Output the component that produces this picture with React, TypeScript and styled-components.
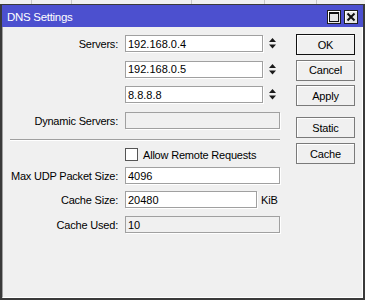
import React from "react";
import styled, { createGlobalStyle } from "styled-components";

const GlobalStyle = createGlobalStyle`
  html, body { margin: 0; padding: 0; background: #f0f0f0; }
  body {
    font-family: "Liberation Sans", Arial, sans-serif;
    font-size: 11px;
    color: #000;
  }
  * { box-sizing: border-box; }
`;

const Page = styled.div`
  width: 365px;
  height: 300px;
  display: flex;
  flex-direction: column;
  overflow: hidden;
`;

const BackStrip = styled.div`
  height: 4px;
  display: flex;
  background: #f0f0f0;
`;

const BackCell = styled.div<{ $w: number }>`
  width: ${(p) => p.$w}px;
  border-right: 1px solid #c8c8c8;
`;

const Window = styled.div`
  flex: 1;
  display: flex;
  flex-direction: column;
  border: 2px solid #3a3a3a;
  border-top-width: 1px;
  background: #f0f0f0;
`;

const TitleBar = styled.div`
  height: 22px;
  background: #4c50cf;
  display: flex;
  align-items: center;
  padding: 1px 5px 0 5px;
  color: #fff;
`;

const TitleText = styled.div`
  flex: 1;
  font-size: 11.5px;
  letter-spacing: -0.3px;
  padding-top: 1px;
`;

const TitleButtons = styled.div`
  display: flex;
  gap: 3px;
`;

const TitleButton = styled.div`
  width: 14px;
  height: 14px;
  border: 1px solid #1e1e1e;
  background: #e6e6e6;
  box-shadow: inset 1px 1px 0 #fff;
  display: flex;
  align-items: center;
  justify-content: center;
`;

const Body = styled.div`
  flex: 1;
  display: flex;
  align-items: flex-start;
  gap: 16px;
  padding: 7px 6px 0 7px;
  border-left: 1px solid #a0a0a0;
  border-right: 1px solid #fff;
  border-bottom: 1px solid #fff;
`;

const FormCol = styled.div`
  width: 270px;
  display: flex;
  flex-direction: column;
  padding-top: 1px;
`;

const Row = styled.div<{ $mb?: number; $h?: number }>`
  display: grid;
  grid-template-columns: 108px 1fr;
  column-gap: 7px;
  align-items: center;
  height: ${(p) => p.$h ?? 17}px;
  margin-bottom: ${(p) => p.$mb ?? 0}px;
`;

const Label = styled.div`
  text-align: right;
  white-space: nowrap;
  letter-spacing: -0.2px;
`;

const Field = styled.div`
  display: flex;
  align-items: center;
  height: 100%;
`;

const TextBox = styled.input<{ $w: number; $disabled?: boolean }>`
  width: ${(p) => p.$w}px;
  height: 17px;
  border: 1px solid #a0a0a0;
  box-shadow: 1px 1px 0 #fff;
  background: ${(p) => (p.$disabled ? "#f0f0f0" : "#fff")};
  font-family: "Liberation Sans", Arial, sans-serif;
  font-size: 11px;
  color: #000;
  padding: 0 2px;
  margin: 0;
  outline: none;
`;

const Spinner = styled.svg`
  margin-left: 6px;
  flex: none;
`;

const Unit = styled.span`
  margin-left: 4px;
  letter-spacing: -0.2px;
`;

const Separator = styled.div`
  border-top: 1px solid #a0a0a0;
  border-bottom: 1px solid #fff;
  margin: 10px 0 7px;
`;

const CheckBox = styled.div`
  width: 13px;
  height: 13px;
  border: 1px solid #555;
  background: #fff;
  flex: none;
`;

const CheckText = styled.span`
  margin-left: 5px;
  letter-spacing: -0.2px;
`;

const ButtonCol = styled.div`
  width: 59px;
  display: flex;
  flex-direction: column;
`;

const Button = styled.div<{ $default?: boolean; $mb?: number }>`
  height: 21px;
  margin-bottom: ${(p) => p.$mb ?? 0}px;
  border: 1px solid ${(p) => (p.$default ? "#111" : "#7a7a7a")};
  background: #f0f0f0;
  box-shadow: inset 1px 1px 0 #fff;
  display: flex;
  align-items: center;
  justify-content: center;
  letter-spacing: -0.2px;
  color: #000;
`;

const SpinIcon = () => (
  <Spinner width="7" height="11" viewBox="0 0 7 11">
    <polygon points="3.5,0 7,4 0,4" fill="#1a1a1a" />
    <polygon points="0,6.5 7,6.5 3.5,10.5" fill="#1a1a1a" />
  </Spinner>
);

const MaxIcon = () => (
  <svg width="10" height="10" viewBox="0 0 10 10">
    <rect x="0.5" y="0.5" width="9" height="9" fill="none" stroke="#111" />
    <rect x="0" y="0" width="10" height="2" fill="#111" />
  </svg>
);

const CloseIcon = () => (
  <svg width="10" height="10" viewBox="0 0 10 10">
    <path d="M1.5 1.5 L8.5 8.5 M8.5 1.5 L1.5 8.5" stroke="#111" strokeWidth="2" />
  </svg>
);

const servers = ["192.168.0.4", "192.168.0.5", "8.8.8.8"];

export default function App() {
  return (
    <Page>
      <GlobalStyle />
      <BackStrip>
        <BackCell $w={32} />
        <BackCell $w={40} />
        <BackCell $w={120} />
        <BackCell $w={73} />
        <BackCell $w={52} />
      </BackStrip>
      <Window>
        <TitleBar>
          <TitleText>DNS Settings</TitleText>
          <TitleButtons>
            <TitleButton>
              <MaxIcon />
            </TitleButton>
            <TitleButton>
              <CloseIcon />
            </TitleButton>
          </TitleButtons>
        </TitleBar>
        <Body>
          <FormCol>
            {servers.map((s, i) => (
              <Row key={s} $mb={i === 0 ? 8.5 : i === 1 ? 8.5 : 9}>
                <Label>{i === 0 ? "Servers:" : ""}</Label>
                <Field>
                  <TextBox $w={138} defaultValue={s} readOnly />
                  <SpinIcon />
                </Field>
              </Row>
            ))}
            <Row>
              <Label>Dynamic Servers:</Label>
              <Field>
                <TextBox $w={155} $disabled defaultValue="" readOnly />
              </Field>
            </Row>
            <Separator />
            <Row $h={13} $mb={6}>
              <Label />
              <Field>
                <CheckBox />
                <CheckText>Allow Remote Requests</CheckText>
              </Field>
            </Row>
            <Row $mb={7}>
              <Label>Max UDP Packet Size:</Label>
              <Field>
                <TextBox $w={155} defaultValue="4096" readOnly />
              </Field>
            </Row>
            <Row $mb={8}>
              <Label>Cache Size:</Label>
              <Field>
                <TextBox $w={132} defaultValue="20480" readOnly />
                <Unit>KiB</Unit>
              </Field>
            </Row>
            <Row>
              <Label>Cache Used:</Label>
              <Field>
                <TextBox $w={155} $disabled defaultValue="10" readOnly />
              </Field>
            </Row>
          </FormCol>
          <ButtonCol>
            <Button $default $mb={4.5}>OK</Button>
            <Button $mb={4.5}>Cancel</Button>
            <Button $mb={11}>Apply</Button>
            <Button $mb={5}>Static</Button>
            <Button>Cache</Button>
          </ButtonCol>
        </Body>
      </Window>
    </Page>
  );
}
